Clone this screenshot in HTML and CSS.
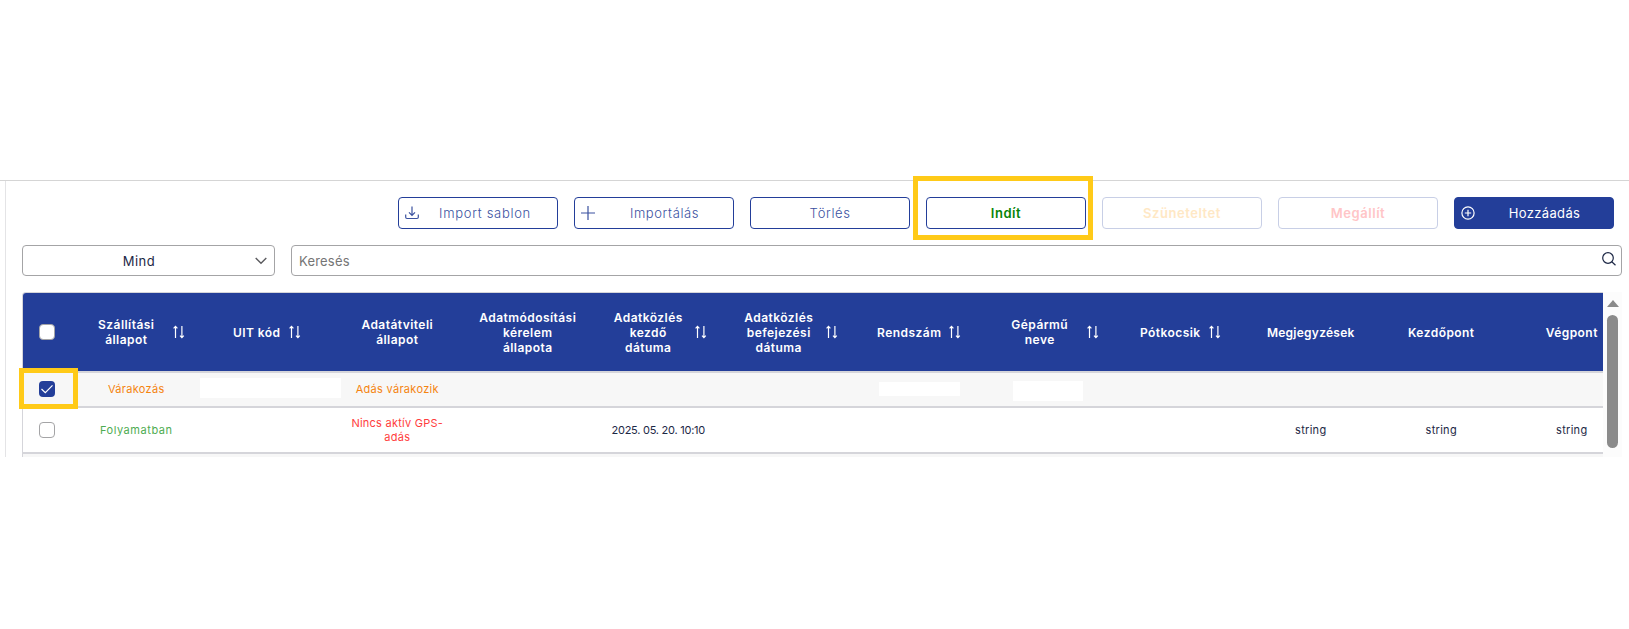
FILE: index.html
```
<!DOCTYPE html>
<html lang="hu">
<head>
<meta charset="utf-8">
<title>Szállítások</title>
<link rel="stylesheet" href="styles.css">
</head>
<body>
<svg class="defs" aria-hidden="true">
  <symbol id="sort" viewBox="0 0 12 14"><path d="M2.5 13V1.5M0.6 3.4L2.5 1.4L4.4 3.4M8.9 1V12.5M7 10.6L8.9 12.6L10.8 10.6" fill="none" stroke="currentColor" stroke-width="1.2"/></symbol>
</svg>
<main class="page">
  <section class="panel">
    <div class="toolbar">
      <button class="btn template"><svg class="icon" viewBox="0 0 14 14"><path d="M7 .5V9M4 6.3L7 9.3L10 6.3M.7 8.5V11.3Q.7 12.5 2 12.5H12Q13.3 12.5 13.3 11.3V8.5"/></svg><span>Import sablon</span></button>
      <button class="btn"><svg class="icon" viewBox="0 0 14 14"><path d="M7 0V14M0 7H14"/></svg><span>Importálás</span></button>
      <button class="btn"><span>Törlés</span></button>
      <button class="btn start marked"><span>Indít</span></button>
      <button class="btn off pause"><span>Szüneteltet</span></button>
      <button class="btn off stop"><span>Megállít</span></button>
      <button class="btn primary"><svg class="icon" viewBox="0 0 14 14"><circle cx="7" cy="7" r="6.1"/><path d="M7 3.8V10.2M3.8 7H10.2"/></svg><span>Hozzáadás</span></button>
    </div>
    <div class="filters">
      <div class="select"><span>Mind</span><svg class="chevron" viewBox="0 0 12 8"><path d="M.7 1L6 6.3L11.3 1"/></svg></div>
      <div class="search"><span>Keresés</span><svg class="glass" viewBox="0 0 14 14"><circle cx="6" cy="6" r="5.3"/><path d="M9.8 9.8L13.5 13.3"/></svg></div>
    </div>
    <div class="grid">
      <div class="table">
        <div class="row head">
          <div><i class="box"></i></div>
          <div><span class="wrap">Szállítási<br>állapot</span><svg class="sort"><use href="#sort"/></svg></div>
          <div><span>UIT kód</span><svg class="sort"><use href="#sort"/></svg></div>
          <div><span>Adatátviteli<br>állapot</span></div>
          <div><span>Adatmódosítási<br>kérelem<br>állapota</span></div>
          <div><span class="wrap">Adatközlés<br>kezdő<br>dátuma</span><svg class="sort"><use href="#sort"/></svg></div>
          <div><span class="wrap">Adatközlés<br>befejezési<br>dátuma</span><svg class="sort"><use href="#sort"/></svg></div>
          <div><span>Rendszám</span><svg class="sort"><use href="#sort"/></svg></div>
          <div><span class="wrap">Gépármű<br>neve</span><svg class="sort"><use href="#sort"/></svg></div>
          <div><span>Pótkocsik</span><svg class="sort"><use href="#sort"/></svg></div>
          <div class="notes"><span>Megjegyzések</span></div>
          <div><span>Kezdőpont</span></div>
          <div><span>Végpont</span></div>
        </div>
        <div class="row first">
          <div class="marked"><i class="box checked"><svg viewBox="0 0 16 16"><path d="M2.5 8L6.3 11.7L13.5 4.3"/></svg></i></div>
          <div class="wait">Várakozás</div>
          <div><i class="blank code"></i></div>
          <div class="wait">Adás várakozik</div>
          <div></div><div></div><div></div>
          <div><i class="blank plate"></i></div>
          <div><i class="blank name"></i></div>
          <div></div><div></div><div></div><div></div>
        </div>
        <div class="row second">
          <div><i class="box"></i></div>
          <div class="run">Folyamatban</div>
          <div></div>
          <div class="bad"><span>Nincs aktív GPS-<br>adás</span></div>
          <div></div>
          <div class="date">2025. 05. 20. 10:10</div>
          <div></div><div></div><div></div><div></div>
          <div>string</div><div>string</div><div>string</div>
        </div>
        <div class="row third"></div>
      </div>
      <div class="scroll"><i class="up"></i><i class="thumb"></i></div>
    </div>
  </section>
</main>
</body>
</html>
```
FILE: styles.css
```
* { box-sizing: border-box; }
body { margin: 0; background: #fff; font-family: Inter, "Open Sans", sans-serif; color: #1d2846; overflow: hidden; }
.defs { position: absolute; width: 0; height: 0; }
.page { margin-top: 180px; border-top: 1px solid #d5d5d5; height: 277px; padding-left: 5px; }
.panel { height: 276px; border-left: 1px solid #e4e4e6; padding: 16px 7px 0 16px; }

.toolbar { display: flex; justify-content: flex-end; gap: 16px; padding-right: 8px; }
.btn { position: relative; display: flex; align-items: center; width: 160px; height: 32px; padding: 0 6px; border: 1px solid #233e99; border-radius: 4px; background: #fff; color: #3a519f; font: 300 13px Inter, sans-serif; letter-spacing: .6px; white-space: nowrap; }
.btn span { flex: 1; text-align: center; }
.icon { width: 14px; height: 14px; flex: none; fill: none; stroke: #3a519f; stroke-width: 1.2; }
.icon + span { padding-left: 7px; }
.template { letter-spacing: .7px; }
.template .icon + span { padding-left: 0; }
.start { color: #078407; font-weight: 600; letter-spacing: .55px; }
.off { border-color: #c8cfe6; font-weight: 600; letter-spacing: .55px; }
.pause { color: #ffe8c5; }
.stop { color: #ffc5c7; }
.primary { background: #233e99; color: #fff; font-weight: 400; letter-spacing: .35px; }
.primary .icon { stroke: #fff; }

.marked { position: relative; }
.marked::after { content: ""; position: absolute; border: 5px solid #ffca18; pointer-events: none; }
.btn.marked::after { inset: -22px -8px -12px -14px; }
.row .marked::after { inset: -5px -7px -4px -4px; z-index: 2; }

.filters { display: flex; gap: 16px; margin-top: 16px; }
.select, .search { display: flex; align-items: center; height: 31px; border: 1px solid #a4a4a6; border-radius: 4px; font-size: 13px; letter-spacing: .35px; }
.select { width: 253px; padding-right: 7px; }
.select span { flex: 1; text-align: center; letter-spacing: .5px; }
.chevron { width: 12px; height: 8px; fill: none; stroke: #5b5b5f; stroke-width: 1.4; }
.search { flex: 1; justify-content: space-between; padding: 0 5px 0 7px; color: #757575; letter-spacing: .2px; }
.glass { width: 14px; height: 14px; margin-top: -3px; fill: none; stroke: #1d2846; stroke-width: 1.2; }

.grid { display: flex; height: 165px; margin-top: 16px; }
.table { width: 1581px; flex: none; border: 1px solid #d5d5da; border-width: 1px 0 0 1px; border-radius: 4px 0 0 0; }
.row { display: grid; grid-template-columns: 48px repeat(11, 130.5px) 96.5px; border-bottom: 2px solid #d5d5da; font-size: 11px; line-height: 14px; letter-spacing: .3px; text-align: center; }
.row > div { display: flex; align-items: center; justify-content: center; }
.row > div:last-child { width: 130.5px; }
.head { height: 80px; border-top-left-radius: 3px; background: #233e99; color: #fff; font-size: 12px; font-weight: 600; line-height: 15px; letter-spacing: .45px; }
.head > div { gap: 8px; }
.notes { letter-spacing: .25px; }
.wrap { width: 78px; }
.sort { width: 12px; height: 14px; flex: none; }
.first { height: 35px; padding-bottom: 1px; background: #f7f7f7; }
.second { height: 46px; }
.third { height: 3px; border: 0; background: #f7f7f7; }
.wait { color: #f58410; }
.run { color: #4eac52; letter-spacing: .55px; }
.bad { color: #ff3d3d; letter-spacing: .25px; }
.date { letter-spacing: -.25px; }
.box { width: 16px; height: 16px; border: 1px solid #a4a4a6; border-radius: 4px; background: #fff; }
.checked { background: #233e99; border: 0; }
.checked svg { display: block; width: 16px; height: 16px; fill: none; stroke: #fff; stroke-width: 1.2; }
.blank { background: #fff; }
.code { width: 141px; height: 20px; margin: 0 -10px 2px -2px; flex: none; }
.plate { width: 81px; height: 14px; }
.name { width: 70px; height: 20px; margin: 4px 0 0 -3px; }
.scroll { display: flex; flex-direction: column; align-items: center; width: 19px; padding: 8px 0 0; background: #fcfcfc; }
.up { border: 6.5px solid transparent; border-bottom: 7px solid #8b8b8b; border-top: 0; }
.thumb { width: 11px; height: 133px; margin-top: 8px; border-radius: 6px; background: #8b8b8b; }
```
